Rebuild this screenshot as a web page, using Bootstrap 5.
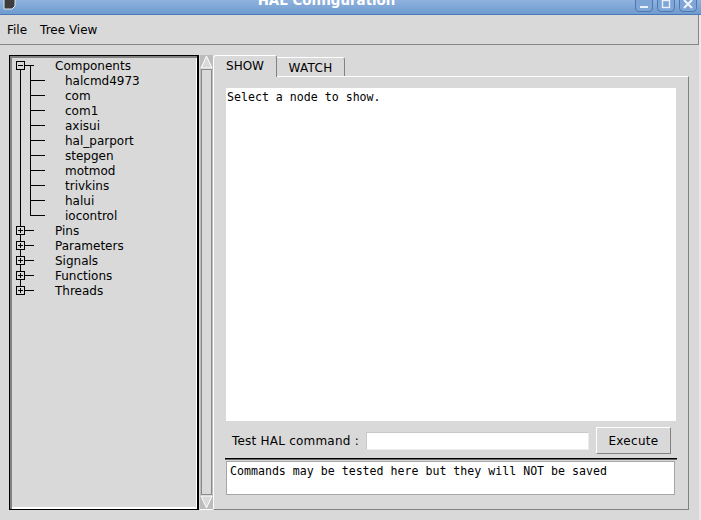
<!DOCTYPE html>
<html lang="en">
<head>
<meta charset="utf-8">
<title>HAL Configuration</title>
<link href="https://cdn.jsdelivr.net/npm/bootstrap@5.3.0/dist/css/bootstrap.min.css" rel="stylesheet">
<style>
html,body{margin:0;height:520px;overflow:hidden}
body{background:#d9d9d9;font-family:"DejaVu Sans",sans-serif;font-size:12px;color:#000;line-height:15px;position:relative}
.win-title{height:15px;background:linear-gradient(#8fb2de,#6f9bd0);border-bottom:1px solid #4a78b4;overflow:hidden}
.win-name{color:#fff;font-weight:700;font-size:13.4px;line-height:13px;margin-top:-6px;text-align:center;width:617px;flex:none;white-space:nowrap}
.win-icon{width:15px;height:14px;margin-top:-3px;margin-left:3px;flex:none}
.win-btn{width:18px;height:15px;margin-top:-3px;border:1px solid #4f78b0;border-radius:0 0 4px 4px;background:#7fa5d6;display:flex;align-items:center;justify-content:center}
.win-ctl{gap:4px;padding-right:4px}
.menu-row{height:30px;border-bottom:1px solid #868686;border-right:1px solid #868686;padding:1px 0 0 7px;gap:13px;align-items:center;margin-right:2px}
.work{padding:10px 0 0 9px}
.tree-box{width:190px;height:455px;border:1px solid #000;border-right-width:2px;box-shadow:inset 2px 2px 0 #828282,inset -1px -2px 0 #fff;padding:2px 0 0 2px;flex:none}
.tree-row{height:15px;white-space:nowrap}
.tree-row svg{flex:none}
.tree-row span{padding-top:1px}
.scroll-rail{width:13px;height:455px;margin-left:1px;background:#bcbcbc;border-bottom:1px solid #fff;flex:none}
.scroll-thumb{flex:1;background:#d9d9d9;border:1px solid #8a8a8a;margin:0 1px}
.right-pane{width:476px;flex:none}
.tab-row{height:21px;align-items:flex-end}
.tab-on,.tab-off{font-size:12px;text-align:center}
.tab-on{width:64px;height:22px;margin-bottom:-1px;border-top:1px solid #fff;border-left:1px solid #fff;border-right:1px solid #828282;border-top-left-radius:3px;border-top-right-radius:3px;line-height:20px;background:#d9d9d9;position:relative;z-index:1}
.tab-off{width:68px;height:19px;border-top:1px solid #fff;border-right:1px solid #828282;border-top-right-radius:3px;line-height:21px;letter-spacing:.3px}
.note{height:434px;width:476px;border-top:1px solid #fff;border-left:1px solid #fff;border-right:1px solid #828282;border-bottom:1px solid #828282;padding:11px 12px 0 12px}
.mono{font-family:"DejaVu Sans Mono",monospace;font-size:11.6px;line-height:15px;white-space:pre}
.show-area{height:333px;background:#fff;padding:2px 0 0 1px;width:450px}
.cmd-row{height:37px;align-items:center;padding:2px 0 0 6px}
.cmd-label{width:126px;letter-spacing:.22px;white-space:nowrap;flex:none;padding-top:1px}
.cmd-input{width:223px;height:18px;margin-left:8px;background:#fff;border:1px solid #ececec;border-left-color:#c8c8c8;border-top-color:#c8c8c8;flex:none}
.exec-btn{width:75px;height:27px;margin-left:7px;padding:0;background:#d9d9d9;border:1px solid #828282;border-top-color:#fff;border-left-color:#fff;border-radius:0;font-size:12px;letter-spacing:.3px;line-height:24px;color:#000;font-family:inherit;flex:none}
.out-rule{height:2px;border-top:1px solid #000;border-bottom:1px solid #666;width:452px;margin-left:-1px}
.out-area{height:34px;background:#fff;width:449px;margin-top:1px;margin-left:0;border:1px solid #a6a6a6;padding:2px 0 0 3px;line-height:14px}
.edge{position:absolute;right:0;top:15px;bottom:0;width:2px;background:#e9e9e9}
</style>
</head>
<body>
<div class="win-title d-flex">
  <svg class="win-icon" viewBox="0 0 15 14"><path d="M1 0h11v9l-3 3H1z" fill="#3c3c3c" stroke="#dfe6ee"/></svg>
  <div class="win-name">HAL Configuration</div>
  <div class="d-flex win-ctl ms-auto">
    <div class="win-btn"><svg width="10" height="8"><rect x="1" y="5" width="8" height="2" fill="#e8f0fa"/></svg></div>
    <div class="win-btn"><svg width="10" height="9"><rect x="1.5" y="0.5" width="7" height="7" fill="none" stroke="#e8f0fa" stroke-width="1.4"/></svg></div>
    <div class="win-btn"><svg width="10" height="9"><path d="M1 0l8 8M9 0L1 8" stroke="#f0f5fc" stroke-width="2"/></svg></div>
  </div>
</div>
<div class="menu-row d-flex"><span>File</span><span>Tree View</span></div>
<div class="work d-flex">
  <div class="tree-box">
    <div class="tree-row d-flex"><svg width="43" height="15" shape-rendering="crispEdges"><path d="M8.500 4v11M12 7.500h10M18.500 7.500v7.500" stroke="#000" fill="none"/><rect x="4.500" y="3.500" width="8" height="8" fill="#d9d9d9" stroke="#000"/><path d="M6 7.500h5" stroke="#000"/></svg><span>Components</span></div>
    <div class="tree-row d-flex"><svg width="53" height="15" shape-rendering="crispEdges"><path d="M8.500 0v15M18.500 0v15M18 7.500h15" stroke="#000"/></svg><span>halcmd4973</span></div>
    <div class="tree-row d-flex"><svg width="53" height="15" shape-rendering="crispEdges"><path d="M8.500 0v15M18.500 0v15M18 7.500h15" stroke="#000"/></svg><span>com</span></div>
    <div class="tree-row d-flex"><svg width="53" height="15" shape-rendering="crispEdges"><path d="M8.500 0v15M18.500 0v15M18 7.500h15" stroke="#000"/></svg><span>com1</span></div>
    <div class="tree-row d-flex"><svg width="53" height="15" shape-rendering="crispEdges"><path d="M8.500 0v15M18.500 0v15M18 7.500h15" stroke="#000"/></svg><span>axisui</span></div>
    <div class="tree-row d-flex"><svg width="53" height="15" shape-rendering="crispEdges"><path d="M8.500 0v15M18.500 0v15M18 7.500h15" stroke="#000"/></svg><span>hal_parport</span></div>
    <div class="tree-row d-flex"><svg width="53" height="15" shape-rendering="crispEdges"><path d="M8.500 0v15M18.500 0v15M18 7.500h15" stroke="#000"/></svg><span>stepgen</span></div>
    <div class="tree-row d-flex"><svg width="53" height="15" shape-rendering="crispEdges"><path d="M8.500 0v15M18.500 0v15M18 7.500h15" stroke="#000"/></svg><span>motmod</span></div>
    <div class="tree-row d-flex"><svg width="53" height="15" shape-rendering="crispEdges"><path d="M8.500 0v15M18.500 0v15M18 7.500h15" stroke="#000"/></svg><span>trivkins</span></div>
    <div class="tree-row d-flex"><svg width="53" height="15" shape-rendering="crispEdges"><path d="M8.500 0v15M18.500 0v15M18 7.500h15" stroke="#000"/></svg><span>halui</span></div>
    <div class="tree-row d-flex"><svg width="53" height="15" shape-rendering="crispEdges"><path d="M8.500 0v15M18.500 0v8M18 7.500h15" stroke="#000"/></svg><span>iocontrol</span></div>
    <div class="tree-row d-flex"><svg width="43" height="15" shape-rendering="crispEdges"><path d="M8.500 0v15M12 7.500h10" stroke="#000"/><rect x="4.500" y="3.500" width="8" height="8" fill="#d9d9d9" stroke="#000"/><path d="M6 7.500h5M8.500 5v5" stroke="#000"/></svg><span>Pins</span></div>
    <div class="tree-row d-flex"><svg width="43" height="15" shape-rendering="crispEdges"><path d="M8.500 0v15M12 7.500h10" stroke="#000"/><rect x="4.500" y="3.500" width="8" height="8" fill="#d9d9d9" stroke="#000"/><path d="M6 7.500h5M8.500 5v5" stroke="#000"/></svg><span>Parameters</span></div>
    <div class="tree-row d-flex"><svg width="43" height="15" shape-rendering="crispEdges"><path d="M8.500 0v15M12 7.500h10" stroke="#000"/><rect x="4.500" y="3.500" width="8" height="8" fill="#d9d9d9" stroke="#000"/><path d="M6 7.500h5M8.500 5v5" stroke="#000"/></svg><span>Signals</span></div>
    <div class="tree-row d-flex"><svg width="43" height="15" shape-rendering="crispEdges"><path d="M8.500 0v15M12 7.500h10" stroke="#000"/><rect x="4.500" y="3.500" width="8" height="8" fill="#d9d9d9" stroke="#000"/><path d="M6 7.500h5M8.500 5v5" stroke="#000"/></svg><span>Functions</span></div>
    <div class="tree-row d-flex"><svg width="43" height="15" shape-rendering="crispEdges"><path d="M8.500 0v4M12 7.500h10" stroke="#000"/><rect x="4.500" y="3.500" width="8" height="8" fill="#d9d9d9" stroke="#000"/><path d="M6 7.500h5M8.500 5v5" stroke="#000"/></svg><span>Threads</span></div>
  </div>
  <div class="scroll-rail d-flex flex-column">
    <svg width="13" height="14" class="flex-shrink-0"><path d="M6.500 1L12 13H1z" fill="#d9d9d9" stroke="#fff"/></svg>
    <div class="scroll-thumb"></div>
    <svg width="13" height="14" class="flex-shrink-0"><path d="M1 1h11L6.500 13z" fill="#d9d9d9" stroke="#fff"/></svg>
  </div>
  <div class="right-pane">
    <div class="tab-row d-flex"><div class="tab-on">SHOW</div><div class="tab-off">WATCH</div></div>
    <div class="note">
      <div class="show-area mono">Select a node to show.</div>
      <div class="cmd-row d-flex"><span class="cmd-label">Test HAL command :</span><div class="cmd-input"></div><button type="button" class="btn exec-btn">Execute</button></div>
      <div class="out-rule"></div>
      <div class="out-area mono">Commands may be tested here but they will NOT be saved</div>
    </div>
  </div>
</div>
<div class="edge"></div>
</body>
</html>
